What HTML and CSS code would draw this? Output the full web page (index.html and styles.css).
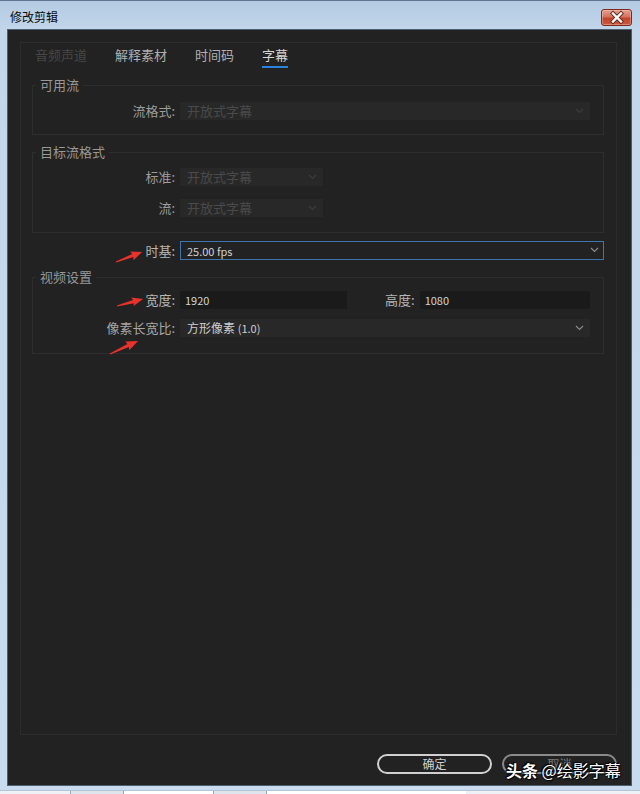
FILE: index.html
```html
<!DOCTYPE html>
<html lang="zh-CN">
<head>
<meta charset="utf-8">
<title>修改剪辑</title>
<link rel="stylesheet" href="styles.css">
</head>
<body>
<div class="window">
  <div class="titlebar">
    <span class="title">修改剪辑</span>
    <span class="close">
      <svg width="28" height="15" viewBox="0 0 28 15">
        <path d="M10 3.5 L18 11.5 M18 3.5 L10 11.5" stroke="#6b2418" stroke-width="4.2" stroke-linecap="square"/>
        <path d="M10 3.5 L18 11.5 M18 3.5 L10 11.5" stroke="#ffffff" stroke-width="2.4" stroke-linecap="square"/>
      </svg>
    </span>
  </div>
  <div class="frame-body">
    <div class="client">
      <div class="panel">
        <div class="tabs">
          <span class="tab disabled">音频声道</span>
          <span class="tab">解释素材</span>
          <span class="tab">时间码</span>
          <span class="tab active">字幕</span>
        </div>

        <fieldset class="group g1">
          <legend>可用流</legend>
          <div class="row">
            <span class="label dim">流格式:</span>
            <div class="select disabled fill">开放式字幕
              <svg class="chev" width="9" height="6" viewBox="0 0 9 6"><path d="M1 1 L4.5 4.5 L8 1" fill="none" stroke="#3c3c3c" stroke-width="1.2"/></svg>
            </div>
          </div>
        </fieldset>

        <fieldset class="group g2">
          <legend>目标流格式</legend>
          <div class="row">
            <span class="label dim">标准:</span>
            <div class="select disabled short">开放式字幕
              <svg class="chev" width="9" height="6" viewBox="0 0 9 6"><path d="M1 1 L4.5 4.5 L8 1" fill="none" stroke="#3c3c3c" stroke-width="1.2"/></svg>
            </div>
          </div>
          <div class="row r2">
            <span class="label dim">流:</span>
            <div class="select disabled short">开放式字幕
              <svg class="chev" width="9" height="6" viewBox="0 0 9 6"><path d="M1 1 L4.5 4.5 L8 1" fill="none" stroke="#3c3c3c" stroke-width="1.2"/></svg>
            </div>
          </div>
        </fieldset>

        <div class="row timebase">
          <span class="label">时基:</span>
          <div class="select focus fill"><span class="num">25.00 fps</span>
            <svg class="chev" width="9" height="6" viewBox="0 0 9 6"><path d="M1 1 L4.5 4.5 L8 1" fill="none" stroke="#8a8a8a" stroke-width="1.2"/></svg>
          </div>
        </div>

        <fieldset class="group g3">
          <legend>视频设置</legend>
          <div class="row">
            <span class="label">宽度:</span>
            <div class="input w">1920</div>
            <span class="label inline">高度:</span>
            <div class="input fill">1080</div>
          </div>
          <div class="row r3">
            <span class="label mid">像素长宽比:</span>
            <div class="select normal fill">方形像素 <span class="num">(1.0)</span>
              <svg class="chev" width="9" height="6" viewBox="0 0 9 6"><path d="M1 1 L4.5 4.5 L8 1" fill="none" stroke="#8a8a8a" stroke-width="1.2"/></svg>
            </div>
          </div>
        </fieldset>
      </div>

      <div class="buttons">
        <span class="btn ok">确定</span>
        <span class="btn cancel">取消</span>
      </div>
    </div>
  </div>
  <div class="frame-bottom"></div>
  <div class="taskstrip">
    <span class="seg s1"></span><span class="seg s2"></span><span class="seg s3"></span><span class="seg s4"></span>
  </div>

  <svg class="annotations" width="640" height="794" viewBox="0 0 640 794">
    <g fill="#e8322b">
      <g transform="translate(116 262) rotate(-21)">
        <polygon points="0,-0.6 18,-1.6 17,-4.6 28,0 17,4.6 18,1.6 0,0.6"/>
      </g>
      <g transform="translate(117 306) rotate(-15)">
        <polygon points="0,-0.6 17,-1.6 16,-4.4 27,0 16,4.4 17,1.6 0,0.6"/>
      </g>
      <g transform="translate(110 354) rotate(-25)">
        <polygon points="0,-0.6 20,-1.7 19,-4.8 31,0 19,4.8 20,1.7 0,0.6"/>
      </g>
    </g>
  </svg>

  <div class="watermark"><b>头条</b> @绘影字幕</div>
</div>
</body>
</html>
```

FILE: styles.css
```css
* { box-sizing: border-box; }
html, body { margin: 0; padding: 0; }
body {
  width: 640px;
  height: 794px;
  overflow: hidden;
  font-family: "Noto Sans CJK SC", "Noto Sans", sans-serif;
  background: #c8daee;
}

.window {
  position: relative;
  width: 640px;
  height: 794px;
  background: linear-gradient(to bottom, #b4cbe3 0px, #c3d6ea 30px, #c9dbee 100%);
  border-top: 1px solid #5f7690;
}

.titlebar {
  height: 28px;
  padding: 4px 8px 0 10px;
  display: flex;
  align-items: center;
  justify-content: space-between;
}
.title {
  font-size: 12px;
  line-height: 16px;
  color: #0b0b0b;
}
.close {
  width: 31px;
  height: 17px;
  margin-top: 1px;
  border: 1px solid #7b2a1d;
  border-radius: 3px;
  background: linear-gradient(to bottom, #e3a08f 0%, #d5735e 45%, #c2432c 55%, #c95a3f 100%);
  display: flex;
  align-items: center;
  justify-content: center;
  box-shadow: inset 0 0 0 1px rgba(255,220,210,0.35);
}
.close svg { display: block; }

.frame-body {
  height: 757px;
  padding: 0 8px 0 7px;
  display: flex;
}
.client {
  flex: 1;
  background: #222222;
  border: 1px solid #4c5e72;
  padding: 12px 14px 0 12px;
  display: flex;
  flex-direction: column;
}

.panel {
  height: 693px;
  border: 1px solid #2c2c2c;
  padding: 0 12px 0 11px;
}

.tabs {
  display: flex;
  gap: 28px;
  padding: 3px 0 0 3px;
  height: 25px;
}
.tab {
  font-size: 13px;
  line-height: 18px;
  color: #b0b0b0;
  padding-bottom: 2px;
  border-bottom: 2px solid transparent;
}
.tab.disabled { color: #474747; }
.tab.active { color: #d6d6d6; border-bottom-color: #2b83e0; }

.group {
  margin: 8px 0 0 0;
  border: 1px solid #2e2e2e;
  padding: 8px 13px 14px 0;
  min-width: 0;
}
.group legend {
  font-size: 13px;
  line-height: 18px;
  color: #989898;
  padding: 0 4px;
  margin-left: 3px;
}
.g2 { padding-top: 7px; padding-bottom: 15px; }
.g3 { padding-top: 5px; padding-bottom: 16px; }

.row {
  display: flex;
  align-items: center;
  height: 18px;
}
.row.r2 { margin-top: 13px; }
.row.r3 { margin-top: 10px; }
.row.timebase { margin-top: 8px; height: 19px; }

.label {
  width: 142px;
  margin-right: 5px;
  text-align: right;
  font-size: 13px;
  line-height: 18px;
  color: #b6b6b6;
  flex: none;
}
.timebase .label { width: 143px; }
.label.dim { color: #9c9c9c; }
.label.mid { color: #a6a6a6; }
.label.inline { width: auto; margin-left: 38px; }

.select, .input {
  position: relative;
  height: 18px;
  padding-left: 7px;
  font-size: 12px;
  line-height: 18px;
  white-space: nowrap;
}
.select.fill, .input.fill { flex: 1; }
.select.short { width: 143px; }
.select.disabled {
  background: #282828;
  color: #4a4a4a;
  font-size: 13px;
}
.select.focus {
  height: 19px;
  background: #222222;
  border: 1px solid #3f75ad;
  color: #d2d2d2;
  padding-left: 6px;
  line-height: 17px;
}
.select.normal {
  background: #282828;
  color: #cfcfcf;
}
.num { font-size: 11px; }
.chev {
  position: absolute;
  right: 6px;
  top: 6px;
}
.select.focus .chev { right: 4px; top: 5px; }

.input {
  background: #1a1a1a;
  color: #d4d4d4;
  font-size: 11px;
  padding-left: 5px;
}
.input.w { width: 167px; flex: none; }

.buttons {
  margin-top: 19px;
  display: flex;
  justify-content: flex-end;
  gap: 10px;
}
.btn {
  width: 115px;
  height: 20px;
  border-radius: 10px;
  font-size: 12px;
  line-height: 16px;
  text-align: center;
}
.btn.ok {
  border: 2px solid #d0d0d0;
  color: #cfcfcf;
}
.btn.cancel {
  border: 2px solid #8a8a8a;
  color: #7a7a7a;
}

.frame-bottom {
  height: 4px;
}
.taskstrip {
  height: 4px;
  background: #eef2f7;
  border-top: 1px solid #b3c4d6;
  display: flex;
}
.seg { height: 3px; border-left: 1px solid #9aa6b3; }
.s1 { margin-left: 70px; width: 53px; background: #dfe5ec; }
.s2 { width: 90px; background: #ffffff; }
.s3 { width: 53px; background: #dfe5ec; }
.s4 { width: 200px; background: #ffffff; }

.annotations {
  position: absolute;
  left: 0;
  top: -1px;
  pointer-events: none;
}

.watermark {
  position: absolute;
  left: 506px;
  top: 758px;
  font-size: 16px;
  line-height: 22px;
  color: #ffffff;
  white-space: nowrap;
  text-shadow: 0 0 2px #000, 1px 1px 1px #000, -1px -1px 1px #000;
}
.watermark b { font-weight: 700; }
```
